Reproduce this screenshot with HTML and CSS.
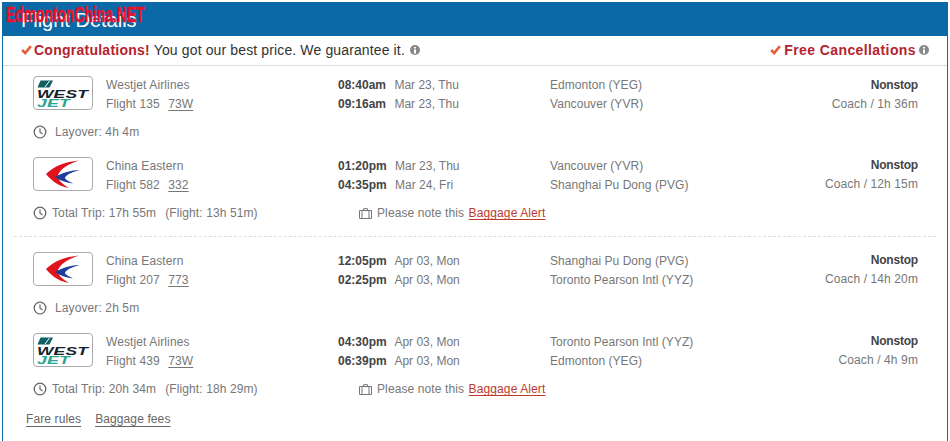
FILE: index.html
```html
<!DOCTYPE html>
<html lang="en">
<head>
<meta charset="utf-8">
<title>Flight Details</title>
<link rel="stylesheet" href="styles.css">
</head>
<body>
<svg class="defs" width="0" height="0" aria-hidden="true">
  <symbol id="clock" viewBox="0 0 14 14"><circle cx="7" cy="7" r="5.8" fill="none" stroke="currentColor" stroke-width="1.3"/><path d="M7 3.4V7.3L9.600 9" fill="none" stroke="currentColor" stroke-width="1.2"/></symbol>
  <symbol id="bag" viewBox="0 0 13 11"><path d="M.5 2.500h12v8H.5zM3 2.500v8M10 2.500v8M4.500 2.500V.7h4v1.800" fill="none" stroke="currentColor"/></symbol>
  <symbol id="check" viewBox="0 0 12 11"><path d="M1.200 5.500L4.600 8.800L10.800 1.200" fill="none" stroke="currentColor" stroke-width="2.800"/></symbol>
  <symbol id="info" viewBox="0 0 10 10"><circle cx="5" cy="5" r="5" fill="currentColor"/><path d="M4 4.500h2V8.500H4zM4 2h2v1.500H4z" fill="#fff"/></symbol>
  <symbol id="westjet" viewBox="0 0 58 32">
    <path d="M6.500 3.500H19L15.500 10.500H3.500z" fill="#0e5f66"/>
    <path d="M15.500 4L11 10" stroke="#fff" fill="none"/>
    <text x="3" y="20.500" class="wj-west" textLength="51" lengthAdjust="spacingAndGlyphs">WEST</text>
    <text x="3" y="30" class="wj-jet" textLength="33" lengthAdjust="spacingAndGlyphs">JET</text>
  </symbol>
  <symbol id="eastern" viewBox="0 0 58 32">
    <path d="M45 2.500C31 4 20 8 12 16C16 21 23 28 35 30C27 25 23 21 24 17C27 10 35 6 45 2.500z" fill="#e1141e"/>
    <path d="M46 12C37 12 28 15 21 19C27 23 33 25 39 25.500C34 23 31 21.500 31 19.500C33 16 39 14 46 12z" fill="#1d3f9a"/>
  </symbol>
</svg>
<div class="watermark">EdmontonChina.NET</div>
<main class="panel">
  <h1 class="title">Flight Details</h1>
  <div class="promo">
    <p class="promo-left"><svg class="check"><use href="#check"/></svg><strong>Congratulations!</strong> You got our best price. We guarantee it. <svg class="info"><use href="#info"/></svg></p>
    <p class="promo-right"><svg class="check"><use href="#check"/></svg><strong>Free Cancellations</strong> <svg class="info"><use href="#info"/></svg></p>
  </div>

  <section class="trip first">
    <div class="flight">
      <div class="logo"><svg><use href="#westjet"/></svg></div>
      <div class="airline"><div>Westjet Airlines</div><div>Flight 135 <u>73W</u></div></div>
      <div class="times"><div><b>08:40am</b> Mar 23, Thu</div><div><b>09:16am</b> Mar 23, Thu</div></div>
      <div class="places"><div>Edmonton (YEG)</div><div>Vancouver (YVR)</div></div>
      <div class="stops"><div><b>Nonstop</b></div><div>Coach / 1h 36m</div></div>
    </div>
    <div class="note"><svg class="clock"><use href="#clock"/></svg><span class="layover">Layover: 4h 4m</span></div>
    <div class="flight">
      <div class="logo"><svg><use href="#eastern"/></svg></div>
      <div class="airline"><div>China Eastern</div><div>Flight 582 <u>332</u></div></div>
      <div class="times"><div><b>01:20pm</b> Mar 23, Thu</div><div><b>04:35pm</b> Mar 24, Fri</div></div>
      <div class="places"><div>Vancouver (YVR)</div><div>Shanghai Pu Dong (PVG)</div></div>
      <div class="stops"><div><b>Nonstop</b></div><div>Coach / 12h 15m</div></div>
    </div>
    <div class="note total"><span class="trip-time"><svg class="clock"><use href="#clock"/></svg>Total Trip: 17h 55m<span class="flight-time">(Flight: 13h 51m)</span></span><span class="alert"><svg class="bag"><use href="#bag"/></svg>Please note this <a href="#">Baggage Alert</a></span></div>
  </section>

  <section class="trip second">
    <div class="flight">
      <div class="logo"><svg><use href="#eastern"/></svg></div>
      <div class="airline"><div>China Eastern</div><div>Flight 207 <u>773</u></div></div>
      <div class="times"><div><b>12:05pm</b> Apr 03, Mon</div><div><b>02:25pm</b> Apr 03, Mon</div></div>
      <div class="places"><div>Shanghai Pu Dong (PVG)</div><div>Toronto Pearson Intl (YYZ)</div></div>
      <div class="stops"><div><b>Nonstop</b></div><div>Coach / 14h 20m</div></div>
    </div>
    <div class="note"><svg class="clock"><use href="#clock"/></svg><span class="layover">Layover: 2h 5m</span></div>
    <div class="flight">
      <div class="logo"><svg><use href="#westjet"/></svg></div>
      <div class="airline"><div>Westjet Airlines</div><div>Flight 439 <u>73W</u></div></div>
      <div class="times"><div><b>04:30pm</b> Apr 03, Mon</div><div><b>06:39pm</b> Apr 03, Mon</div></div>
      <div class="places"><div>Toronto Pearson Intl (YYZ)</div><div>Edmonton (YEG)</div></div>
      <div class="stops"><div><b>Nonstop</b></div><div>Coach / 4h 9m</div></div>
    </div>
    <div class="note total"><span class="trip-time"><svg class="clock"><use href="#clock"/></svg>Total Trip: 20h 34m<span class="flight-time">(Flight: 18h 29m)</span></span><span class="alert"><svg class="bag"><use href="#bag"/></svg>Please note this <a href="#">Baggage Alert</a></span></div>
  </section>

  <footer class="links"><a href="#">Fare rules</a><a href="#">Baggage fees</a></footer>
</main>
</body>
</html>
```
FILE: styles.css
```css
html, body { margin: 0; padding: 0; background: #fff; height: 441px; overflow: hidden; }
body { font-family: "Liberation Sans", Arial, sans-serif; font-size: 12px; letter-spacing: .11px; color: #777; padding: 2px 2px 0; box-sizing: border-box; position: relative; }
.defs { position: absolute; }
.watermark { position: absolute; left: 6px; top: 2px; font-family: "Liberation Sans", sans-serif; font-weight: bold; font-size: 22px; letter-spacing: 0; line-height: 26px; color: #e8112d; -webkit-text-stroke: .5px #e8112d; transform: scaleX(.63); transform-origin: left top; white-space: nowrap; }
.panel { border-left: 1px solid #0a69a6; border-right: 1px solid #0a69a6; height: 439px; }
.title { margin: 0 -1px; height: 34px; background: #0a69a6; color: #fff; font-size: 20px; font-weight: normal; letter-spacing: 0; line-height: 36px; padding-left: 19px; }
.promo { height: 29px; box-sizing: content-box; border-bottom: 1px solid #ddd; display: flex; justify-content: space-between; align-items: center; padding: 0 18px 0 18px; font-size: 14px; letter-spacing: .13px; color: #333; }
.promo p { margin: 0 0 2px; display: flex; align-items: center; white-space: pre; }
.promo strong { color: #b5232e; letter-spacing: .25px; }
.promo-right strong { letter-spacing: .4px; }
.promo-right .check { margin-right: 3px; }
.check { width: 11px; height: 10px; color: #e0603a; margin-right: 2px; }
.info { width: 10px; height: 10px; color: #888; margin-left: 1px; }
.promo-right .info { margin-left: 3px; }
.trip { box-sizing: border-box; }
.trip.first { padding: 10px 29px 0 30px; height: 170px; }
.trip.second { border-top: 1px dashed #ddd; margin: 0 11px; padding: 15px 18px 0 19px; height: 160px; }
.flight { display: grid; grid-template-columns: 73px 232px 212px 1fr auto; line-height: 19px; height: 34px; align-items: center; }
.logo { width: 58px; height: 32px; border: 1px solid #aaa; border-radius: 4px; background: #fff; align-self: start; }
.logo svg { width: 58px; height: 32px; display: block; }
.airline u { margin-left: 5px; text-underline-offset: 2px; }
.times { letter-spacing: 0; }
.times b { color: #444; margin-right: 5px; }
.places { letter-spacing: .05px; }
.stops { text-align: right; }
.stops b { color: #444; letter-spacing: -.2px; }
.note + .flight .stops, .second .stops { margin-top: -2px; }
.note { height: 47px; box-sizing: border-box; display: flex; align-items: center; padding-bottom: 4px; }
.note.total { height: 44px; padding: 0; }
.clock { width: 14px; height: 14px; color: #666; margin-right: 5px; flex: none; }
.layover { margin-left: 3px; }
.flight-time { margin-left: 9px; }
.trip-time { display: flex; align-items: center; width: 326px; white-space: pre; }
.alert { display: flex; align-items: center; white-space: pre; }
.bag { width: 13px; height: 11px; color: #777; margin-right: 5px; }
.alert a { color: #c0392b; margin-left: 1px; text-decoration: underline; text-underline-offset: 2px; }
.links { display: flex; gap: 14px; padding: 16px 0 0 23px; }
.links a { color: #666; text-decoration: underline; text-underline-offset: 3px; }
.wj-west { font: italic bold 11px "Liberation Sans", sans-serif; fill: #14222c; }
.wj-jet { font: italic bold 10px "Liberation Sans", sans-serif; fill: #2aa58f; }
```
